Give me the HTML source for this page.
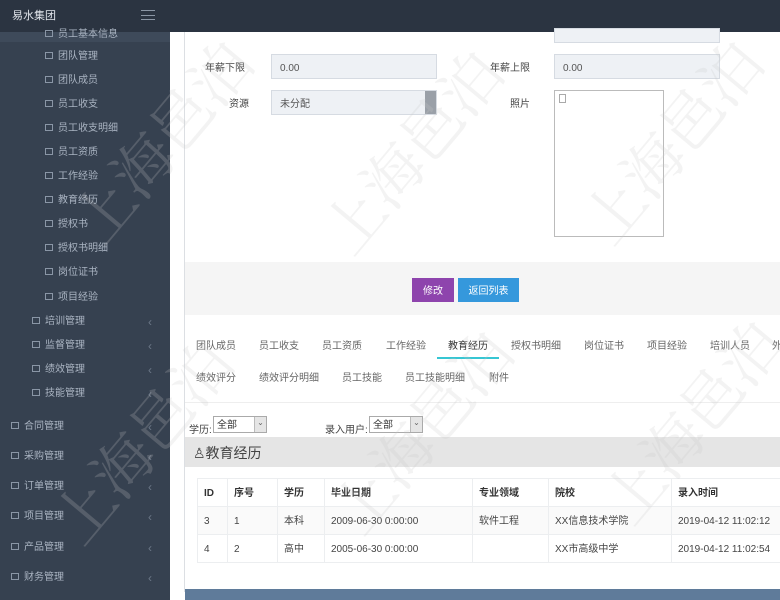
<!DOCTYPE html>
<html><head><meta charset="utf-8"><style>
*{margin:0;padding:0;box-sizing:border-box}
body{width:780px;height:600px;overflow:hidden;position:relative;background:#fff;font-family:"Liberation Sans","Noto Sans CJK SC",sans-serif;font-size:10px;color:#333;line-height:1.2}
.a{position:absolute;white-space:nowrap}
#top{left:0;top:0;width:780px;height:32px;background:#2b3441}
#side{left:0;top:34px;width:170px;height:566px;background:#364150}
.si{position:absolute;color:#aab4c2;font-size:10px;line-height:12px}
.ic{display:inline-block;width:8px;height:7px;border:1px solid #8a96a6;margin-right:5px;vertical-align:0}
.chev{position:absolute;left:148px;color:#6c7888;font-size:12px;line-height:12px}
.lbl{font-size:10px;color:#444;line-height:12px}
.inp{position:absolute;background:#eef1f5;border:1px solid #d6dbe2;height:25px;color:#555;font-size:10px;padding:2px 8px 0;line-height:23px}
.tab{position:absolute;font-size:10px;color:#666;line-height:12px}
td,th{border:1px solid #eceef0;height:28px;padding:2px 6px 0;font-size:10px;color:#444;vertical-align:middle;line-height:12px}
th{color:#333;text-align:left;font-weight:bold}
.btn{position:absolute;top:278px;height:24px;color:#fff;font-size:10px;text-align:center;line-height:24px;padding-top:2px}
.wm{position:absolute;font-size:60px;color:rgba(200,200,200,.22);transform:rotate(-50deg);font-family:"Noto Serif CJK SC",serif;white-space:nowrap;line-height:1}
</style></head><body>
<div class="a" style="left:0;top:32px;width:170px;height:2px;background:#364150"></div>
<div id="top" class="a">
<div class="a" style="left:12px;top:10px;color:#e0e4ea;font-size:11px">易水集团</div>
<div class="a" style="left:141px;top:10px;width:14px;height:10px;border-top:1px solid #8b96a5;border-bottom:1px solid #8b96a5"></div>
<div class="a" style="left:141px;top:15px;width:14px;height:1px;background:#8b96a5"></div>
</div>
<div id="side" class="a">
<div class="a" style="left:0;top:-2px;width:170px;height:10px;background:#3e4a5a"></div>
<div class="si" style="left:45px;top:-5px"><span class="ic"></span>员工基本信息</div>
<div class="si" style="left:45px;top:17px"><span class="ic"></span>团队管理</div>
<div class="si" style="left:45px;top:41px"><span class="ic"></span>团队成员</div>
<div class="si" style="left:45px;top:65px"><span class="ic"></span>员工收支</div>
<div class="si" style="left:45px;top:89px"><span class="ic"></span>员工收支明细</div>
<div class="si" style="left:45px;top:113px"><span class="ic"></span>员工资质</div>
<div class="si" style="left:45px;top:137px"><span class="ic"></span>工作经验</div>
<div class="si" style="left:45px;top:161px"><span class="ic"></span>教育经历</div>
<div class="si" style="left:45px;top:185px"><span class="ic"></span>授权书</div>
<div class="si" style="left:45px;top:209px"><span class="ic"></span>授权书明细</div>
<div class="si" style="left:45px;top:233px"><span class="ic"></span>岗位证书</div>
<div class="si" style="left:45px;top:258px"><span class="ic"></span>项目经验</div>
<div class="si" style="left:32px;top:282px"><span class="ic"></span>培训管理</div><div class="chev" style="top:282px">‹</div>
<div class="si" style="left:32px;top:306px"><span class="ic"></span>监督管理</div><div class="chev" style="top:306px">‹</div>
<div class="si" style="left:32px;top:330px"><span class="ic"></span>绩效管理</div><div class="chev" style="top:330px">‹</div>
<div class="si" style="left:32px;top:354px"><span class="ic"></span>技能管理</div><div class="chev" style="top:354px">‹</div>
<div class="si" style="left:11px;top:387px"><span class="ic"></span>合同管理</div><div class="chev" style="top:387px">‹</div>
<div class="si" style="left:11px;top:417px"><span class="ic"></span>采购管理</div><div class="chev" style="top:417px">‹</div>
<div class="si" style="left:11px;top:447px"><span class="ic"></span>订单管理</div><div class="chev" style="top:447px">‹</div>
<div class="si" style="left:11px;top:477px"><span class="ic"></span>项目管理</div><div class="chev" style="top:477px">‹</div>
<div class="si" style="left:11px;top:508px"><span class="ic"></span>产品管理</div><div class="chev" style="top:508px">‹</div>
<div class="si" style="left:11px;top:538px"><span class="ic"></span>财务管理</div><div class="chev" style="top:538px">‹</div>
</div>
<div class="a" style="left:184px;top:32px;width:1px;height:560px;background:#dcdfe3"></div>
<div class="inp" style="left:554px;top:28px;width:166px;height:15px"></div>
<div class="a lbl" style="left:205px;top:63px">年薪下限</div>
<div class="inp" style="left:271px;top:54px;width:166px">0.00</div>
<div class="a lbl" style="left:229px;top:99px">资源</div>
<div class="inp" style="left:271px;top:90px;width:166px">未分配</div>
<div class="a" style="left:425px;top:91px;width:11px;height:23px;background:#9aa0a8"></div>
<div class="a lbl" style="left:490px;top:63px">年薪上限</div>
<div class="inp" style="left:554px;top:54px;width:166px">0.00</div>
<div class="a lbl" style="left:510px;top:99px">照片</div>
<div class="a" style="left:554px;top:90px;width:110px;height:147px;border:1px solid #bbb"></div>
<div class="a" style="left:559px;top:94px;width:7px;height:9px;border:1px solid #aaa"></div>
<div class="a" style="left:185px;top:262px;width:595px;height:53px;background:#f5f5f5"></div>
<div class="btn" style="left:412px;width:42px;background:#8e44ad">修改</div>
<div class="btn" style="left:458px;width:61px;background:#3598dc">返回列表</div>
<div class="tab" style="left:196px;top:341px">团队成员</div>
<div class="tab" style="left:259px;top:341px">员工收支</div>
<div class="tab" style="left:322px;top:341px">员工资质</div>
<div class="tab" style="left:386px;top:341px">工作经验</div>
<div class="tab" style="left:448px;top:341px;color:#333">教育经历</div>
<div class="a" style="left:437px;top:357px;width:62px;height:2px;background:#36c6d3"></div>
<div class="tab" style="left:511px;top:341px">授权书明细</div>
<div class="tab" style="left:584px;top:341px">岗位证书</div>
<div class="tab" style="left:647px;top:341px">项目经验</div>
<div class="tab" style="left:710px;top:341px">培训人员</div>
<div class="tab" style="left:772px;top:341px">外</div>
<div class="tab" style="left:196px;top:373px">绩效评分</div>
<div class="tab" style="left:259px;top:373px">绩效评分明细</div>
<div class="tab" style="left:342px;top:373px">员工技能</div>
<div class="tab" style="left:405px;top:373px">员工技能明细</div>
<div class="tab" style="left:489px;top:373px">附件</div>
<div class="a" style="left:185px;top:402px;width:595px;height:1px;background:#eee"></div>
<div class="a lbl" style="left:189px;top:425px">学历:</div>
<div class="a" style="left:213px;top:416px;width:54px;height:17px;border:1px solid #aaa;font-size:10px;padding:1px 3px 0;line-height:15px">全部</div>
<div class="a" style="left:254px;top:417px;width:12px;height:15px;background:#e5e5e5;border-left:1px solid #bbb;font-size:8px;text-align:center;color:#666;line-height:12px">⌄</div>
<div class="a lbl" style="left:325px;top:425px">录入用户:</div>
<div class="a" style="left:369px;top:416px;width:54px;height:17px;border:1px solid #aaa;font-size:10px;padding:1px 3px 0;line-height:15px">全部</div>
<div class="a" style="left:410px;top:417px;width:12px;height:15px;background:#e5e5e5;border-left:1px solid #bbb;font-size:8px;text-align:center;color:#666;line-height:12px">⌄</div>
<div class="a" style="left:185px;top:437px;width:595px;height:30px;background:#e5e5e5"></div>
<div class="a" style="left:193px;top:444px;font-size:14px;color:#444;line-height:18px">♙教育经历</div>
<table class="a" style="left:197px;top:478px;width:600px;border-collapse:collapse">
<tr><th style="width:30px">ID</th><th style="width:50px">序号</th><th style="width:47px">学历</th><th style="width:148px">毕业日期</th><th style="width:76px">专业领域</th><th style="width:123px">院校</th><th>录入时间</th></tr>
<tr style="background:#fafafa"><td>3</td><td>1</td><td>本科</td><td>2009-06-30 0:00:00</td><td>软件工程</td><td>XX信息技术学院</td><td>2019-04-12 11:02:12</td></tr>
<tr><td>4</td><td>2</td><td>高中</td><td>2005-06-30 0:00:00</td><td></td><td>XX市高级中学</td><td>2019-04-12 11:02:54</td></tr>
</table>
<div class="a" style="left:185px;top:589px;width:595px;height:11px;background:#5f7b9a"></div>
<div class="wm" style="left:40px;top:110px">上海邑泊</div>
<div class="wm" style="left:290px;top:120px">上海邑泊</div>
<div class="wm" style="left:550px;top:110px">上海邑泊</div>
<div class="wm" style="left:20px;top:410px">上海邑泊</div>
<div class="wm" style="left:300px;top:400px">上海邑泊</div>
<div class="wm" style="left:570px;top:390px">上海邑泊</div>
</body></html>
